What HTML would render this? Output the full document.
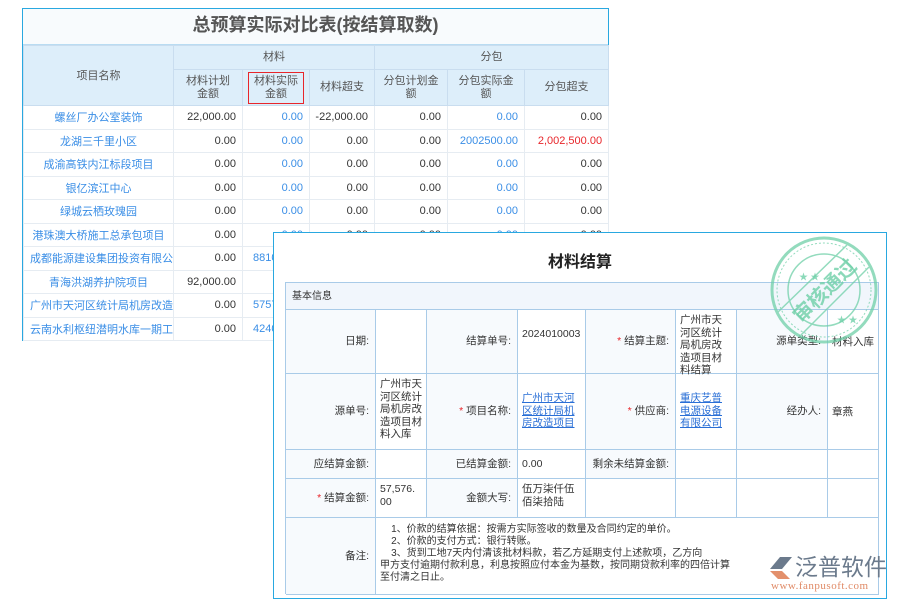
<!DOCTYPE html>
<html><head><meta charset="utf-8"><style>
*{margin:0;padding:0;box-sizing:border-box}
body{width:900px;height:600px;background:#fff;position:relative;overflow:hidden;font-family:"Liberation Sans","Noto Sans CJK SC",sans-serif;font-size:11px;color:#333}
.a{position:absolute}
#back{left:22px;top:8px;width:587px;height:333px;border:1px solid #29a8e0;background:#fff}
#back table{border-collapse:collapse;position:absolute;left:0;top:36px;width:585px;table-layout:fixed}
#back td{border:1px solid #e6ecf2;height:23.5px;text-align:right;padding-right:6px;font-size:11px;color:#333;white-space:nowrap;overflow:hidden}
#back td.n{text-align:center;color:#3a8ee6;padding:0}
#back td.b{color:#3a8ee6}
#back td.r{color:#e8262b}
#back tr.h td{background:#ddeefa;text-align:center;color:#555;padding:0;border-color:#c9ddef;line-height:13px}
#front{left:273px;top:232px;width:614px;height:367px;border:1px solid #29a8e0;background:#fff}
.c{position:absolute;border-right:1px solid #a9cbe8;border-bottom:1px solid #a9cbe8;font-size:10.5px;color:#333;line-height:12.5px;word-break:break-all}
.l{text-align:right;padding-right:6px;display:flex;align-items:center;justify-content:flex-end}
.v{padding:4px 4px}
.lk{color:#2a6fd6;text-decoration:underline}
.s{color:#e8262b}
</style></head><body>
<div class="a" id="back">
<div class="a" style="left:0;top:0;width:585px;height:36px;background:#f8fbfd;text-align:center;line-height:32px;font-size:18px;font-weight:bold;color:#555;border-bottom:1px solid #b9dcf2">总预算实际对比表(按结算取数)</div>
<table>
<colgroup><col style="width:150px"><col style="width:69px"><col style="width:67px"><col style="width:65px"><col style="width:73px"><col style="width:77px"><col style="width:84px"></colgroup>
<tr class="h"><td rowspan="2" style="vertical-align:top;padding-top:24px">项目名称</td><td colspan="3" style="height:24px">材料</td><td colspan="3">分包</td></tr>
<tr class="h"><td style="height:36px">材料计划<br>金额</td><td><span style="display:inline-block;border:1px solid #e8262b;width:56px;padding:2px 0">材料实际<br>金额</span></td><td>材料超支</td><td>分包计划金<br>额</td><td>分包实际金<br>额</td><td>分包超支</td></tr>
<tr><td class="n">螺丝厂办公室装饰</td><td>22,000.00</td><td class="b">0.00</td><td>-22,000.00</td><td>0.00</td><td class="b">0.00</td><td>0.00</td></tr>
<tr><td class="n">龙湖三千里小区</td><td>0.00</td><td class="b">0.00</td><td>0.00</td><td>0.00</td><td class="b">2002500.00</td><td class="r">2,002,500.00</td></tr>
<tr><td class="n">成渝高铁内江标段项目</td><td>0.00</td><td class="b">0.00</td><td>0.00</td><td>0.00</td><td class="b">0.00</td><td>0.00</td></tr>
<tr><td class="n">银亿滨江中心</td><td>0.00</td><td class="b">0.00</td><td>0.00</td><td>0.00</td><td class="b">0.00</td><td>0.00</td></tr>
<tr><td class="n">绿城云栖玫瑰园</td><td>0.00</td><td class="b">0.00</td><td>0.00</td><td>0.00</td><td class="b">0.00</td><td>0.00</td></tr>
<tr><td class="n">港珠澳大桥施工总承包项目</td><td>0.00</td><td class="b">0.00</td><td>0.00</td><td>0.00</td><td class="b">0.00</td><td>0.00</td></tr>
<tr><td class="n" style="text-align:left;padding-left:6px">成都能源建设集团投资有限公司</td><td>0.00</td><td class="b" style="text-align:left;padding-left:10px">8810</td><td></td><td></td><td></td><td></td></tr>
<tr><td class="n">青海洪湖养护院项目</td><td>92,000.00</td><td></td><td></td><td></td><td></td><td></td></tr>
<tr><td class="n" style="text-align:left;padding-left:6px">广州市天河区统计局机房改造项目</td><td>0.00</td><td class="b" style="text-align:left;padding-left:10px">5757</td><td></td><td></td><td></td><td></td></tr>
<tr><td class="n" style="text-align:left;padding-left:6px">云南水利枢纽潜明水库一期工程</td><td>0.00</td><td class="b" style="text-align:left;padding-left:10px">4240</td><td></td><td></td><td></td><td></td></tr>
</table>
</div>

<div class="a" id="front">
<div class="a" style="left:0;top:15px;width:612px;text-align:center;font-size:16px;font-weight:bold;color:#222">材料结算</div>
<div class="a" style="left:11px;top:49px;width:594px;height:312px;border-left:1px solid #a9cbe8;border-top:1px solid #a9cbe8;background:#fff">
<div class="c" style="left:0;top:0;width:593px;height:27px;background:#f1f6fc;padding:8px 6px;font-size:10px">基本信息</div>
<div class="c l" style="left:0;top:27px;width:90px;height:64px;background:#f7fafd">日期:</div>
<div class="c" style="left:90px;top:27px;width:51px;height:64px"></div>
<div class="c l" style="left:141px;top:27px;width:91px;height:64px;background:#f7fafd">结算单号:</div>
<div class="c v" style="left:232px;top:27px;width:68px;height:64px;padding-top:18px">2024010003</div>
<div class="c l" style="left:300px;top:27px;width:90px;height:64px;background:#f7fafd"><span class="s">*</span>&nbsp;结算主题:</div>
<div class="c v" style="left:390px;top:27px;width:61px;height:64px">广州市天河区统计局机房改造项目材料结算</div>
<div class="c l" style="left:451px;top:27px;width:91px;height:64px;background:#f7fafd">源单类型:</div>
<div class="c v" style="left:542px;top:27px;width:51px;height:64px;padding-top:26px">材料入库</div>
<div class="c l" style="left:0;top:91px;width:90px;height:76px;background:#f7fafd">源单号:</div>
<div class="c v" style="left:90px;top:91px;width:51px;height:76px">广州市天河区统计局机房改造项目材料入库</div>
<div class="c l" style="left:141px;top:91px;width:91px;height:76px;background:#f7fafd"><span class="s">*</span>&nbsp;项目名称:</div>
<div class="c v" style="left:232px;top:91px;width:68px;height:76px;padding-top:18px"><span class="lk">广州市天河区统计局机房改造项目</span></div>
<div class="c l" style="left:300px;top:91px;width:90px;height:76px;background:#f7fafd"><span class="s">*</span>&nbsp;供应商:</div>
<div class="c v" style="left:390px;top:91px;width:61px;height:76px;padding-top:18px"><span class="lk">重庆艺普电源设备有限公司</span></div>
<div class="c l" style="left:451px;top:91px;width:91px;height:76px;background:#f7fafd">经办人:</div>
<div class="c v" style="left:542px;top:91px;width:51px;height:76px;padding-top:32px">章燕</div>
<div class="c l" style="left:0;top:167px;width:90px;height:29px;background:#f7fafd">应结算金额:</div>
<div class="c" style="left:90px;top:167px;width:51px;height:29px"></div>
<div class="c l" style="left:141px;top:167px;width:91px;height:29px;background:#f7fafd">已结算金额:</div>
<div class="c v" style="left:232px;top:167px;width:68px;height:29px;padding-top:8px">0.00</div>
<div class="c l" style="left:300px;top:167px;width:90px;height:29px;background:#f7fafd">剩余未结算金额:</div>
<div class="c" style="left:390px;top:167px;width:61px;height:29px"></div>
<div class="c" style="left:451px;top:167px;width:91px;height:29px"></div>
<div class="c" style="left:542px;top:167px;width:51px;height:29px"></div>
<div class="c l" style="left:0;top:196px;width:90px;height:39px;background:#f7fafd"><span class="s">*</span>&nbsp;结算金额:</div>
<div class="c v" style="left:90px;top:196px;width:51px;height:39px;padding-right:8px">57,576.00</div>
<div class="c l" style="left:141px;top:196px;width:91px;height:39px;background:#f7fafd">金额大写:</div>
<div class="c v" style="left:232px;top:196px;width:68px;height:39px">伍万柒仟伍佰柒拾陆</div>
<div class="c" style="left:300px;top:196px;width:90px;height:39px"></div>
<div class="c" style="left:390px;top:196px;width:61px;height:39px"></div>
<div class="c" style="left:451px;top:196px;width:91px;height:39px"></div>
<div class="c" style="left:542px;top:196px;width:51px;height:39px"></div>
<div class="c l" style="left:0;top:235px;width:90px;height:77px;background:#f7fafd">备注:</div>
<div class="c" style="left:90px;top:235px;width:503px;height:77px;padding:6px 4px;font-size:10px;line-height:12px">&nbsp;&nbsp;&nbsp;&nbsp;1、价款的结算依据：按需方实际签收的数量及合同约定的单价。<br>&nbsp;&nbsp;&nbsp;&nbsp;2、价款的支付方式：银行转账。<br>&nbsp;&nbsp;&nbsp;&nbsp;3、货到工地7天内付清该批材料款，若乙方延期支付上述款项，乙方向<br>甲方支付逾期付款利息，利息按照应付本金为基数，按同期贷款利率的四倍计算<br>至付清之日止。</div>
</div>
<svg class="a" style="left:495px;top:2px" width="110" height="110" viewBox="0 0 110 110">
<g fill="none" stroke="#6fd0a8" opacity="0.75">
<circle cx="55" cy="55" r="52" stroke-width="3"/>
<circle cx="55" cy="55" r="47" stroke-width="1" stroke-dasharray="2 2"/>
<circle cx="55" cy="55" r="36" stroke-width="1.5"/>
<path d="M8 78 L78 10 M32 100 L100 32" stroke-width="1.5"/>
</g>
<g fill="#6fd0a8" opacity="0.8"><text x="30" y="45" font-size="9">★ ★</text><text x="68" y="88" font-size="9">★ ★</text>
<text x="55" y="63" font-size="20" font-weight="bold" text-anchor="middle" transform="rotate(-45 55 55)" font-family="Noto Sans CJK SC,sans-serif">审核通过</text></g>
</svg>
</div>
<svg class="a" style="left:768px;top:555px" width="26" height="24" viewBox="0 0 26 24"><path d="M2 14 L12 2 L24 2 L14 14 Z" fill="#6b7a8c"/><path d="M2 16 L10 24 L22 24 L14 16 Z" fill="#e3906c"/></svg>
<div class="a" style="left:795px;top:551px;font-size:23px;color:#6b7a8c;font-family:'Noto Sans CJK SC',sans-serif;line-height:28px">泛普软件</div>
<div class="a" style="left:771px;top:580px;font-size:11px;color:#e08a66;font-family:'Liberation Serif',serif;letter-spacing:0.5px">www.fanpusoft.com</div>
</body></html>
